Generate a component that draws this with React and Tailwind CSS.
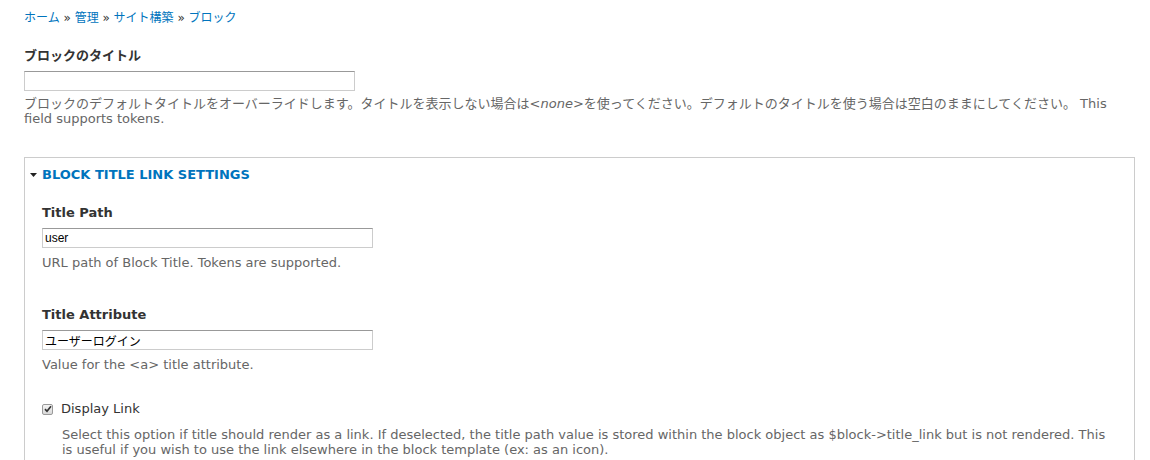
import React from 'react';

const font = { fontFamily: '"DejaVu Sans", "Noto Sans CJK JP", sans-serif' };

const Field = ({ label, value, children }) => (
  <div className="flex flex-col">
    <label className="text-[13px] font-bold leading-[18px] text-[#333]">{label}</label>
    <input
      readOnly
      value={value}
      className="mt-[6px] h-[20px] w-[331px] border border-[#ccc] border-t-[#999] px-[2px] text-[12px] text-black outline-none"
      style={{ fontFamily: '"Liberation Sans", "Noto Sans CJK JP", sans-serif' }}
    />
    <div className="mt-[6px] text-[13px] leading-[17px] text-[#666]">{children}</div>
  </div>
);

const Check = () => (
  <span className="flex h-[11px] w-[11px] items-center justify-center rounded-[2px] border border-[#9a9a9a] bg-gradient-to-b from-[#f4f4f4] to-[#d8d8d8]">
    <svg width="8" height="8" viewBox="0 0 8 8">
      <path d="M1 4.2 L3 6.3 L7 1.2" fill="none" stroke="#333" strokeWidth="1.7" />
    </svg>
  </span>
);

export default function App() {
  return (
    <div className="min-h-[460px] bg-white px-[24px] pt-[9px]" style={font}>
      <nav className="text-[12px] leading-[18px] text-[#0074bd]">
        ホーム <span className="text-[#333]">»</span> 管理 <span className="text-[#333]">»</span> サイト構築{' '}
        <span className="text-[#333]">»</span> ブロック
      </nav>

      <div className="mt-[20px] w-[1111px]">
        <Field label="ブロックのタイトル" value="">
          <div className="-mt-[2px] flex h-[17px] items-center whitespace-nowrap">
            ブロックのデフォルトタイトルをオーバーライドします。タイトルを表示しない場合は<em>&lt;none&gt;</em>を使ってください。デフォルトのタイトルを使う場合は空白のままにしてください。&nbsp;This
          </div>
          <div className="-mt-[2px] h-[17px]">field supports tokens.</div>
        </Field>
      </div>

      <fieldset className="mt-[30px] w-[1111px] border border-[#ccc] px-[17px] pb-[20px] pt-[8px]">
        <div className="flex items-center text-[13px] font-bold leading-[18px] text-[#0074bd]">
          <svg width="7" height="4" viewBox="0 0 7 4" className="-ml-[12px] mr-[5px]">
            <path d="M0 0 H7 L3.5 4 Z" fill="#222" />
          </svg>
          BLOCK TITLE LINK SETTINGS
        </div>

        <div className="mt-[20px]">
          <Field label="Title Path" value="user">
            URL path of Block Title. Tokens are supported.
          </Field>
        </div>

        <div className="mt-[35px]">
          <Field label="Title Attribute" value="ユーザーログイン">
            Value for the &lt;a&gt; title attribute.
          </Field>
        </div>

        <div className="mt-[27px] flex items-center gap-[8px]">
          <Check />
          <span className="text-[13px] leading-[18px] text-[#333]">Display Link</span>
        </div>
        <p className="ml-[20px] mt-[9px] text-[13px] leading-[15px] text-[#666]">
          Select this option if title should render as a link. If deselected, the title path value is stored within the block object as $block-&gt;title_link but is not rendered. This is useful if you wish to use the link elsewhere in the block template (ex: as an icon).
        </p>
      </fieldset>
    </div>
  );
}
